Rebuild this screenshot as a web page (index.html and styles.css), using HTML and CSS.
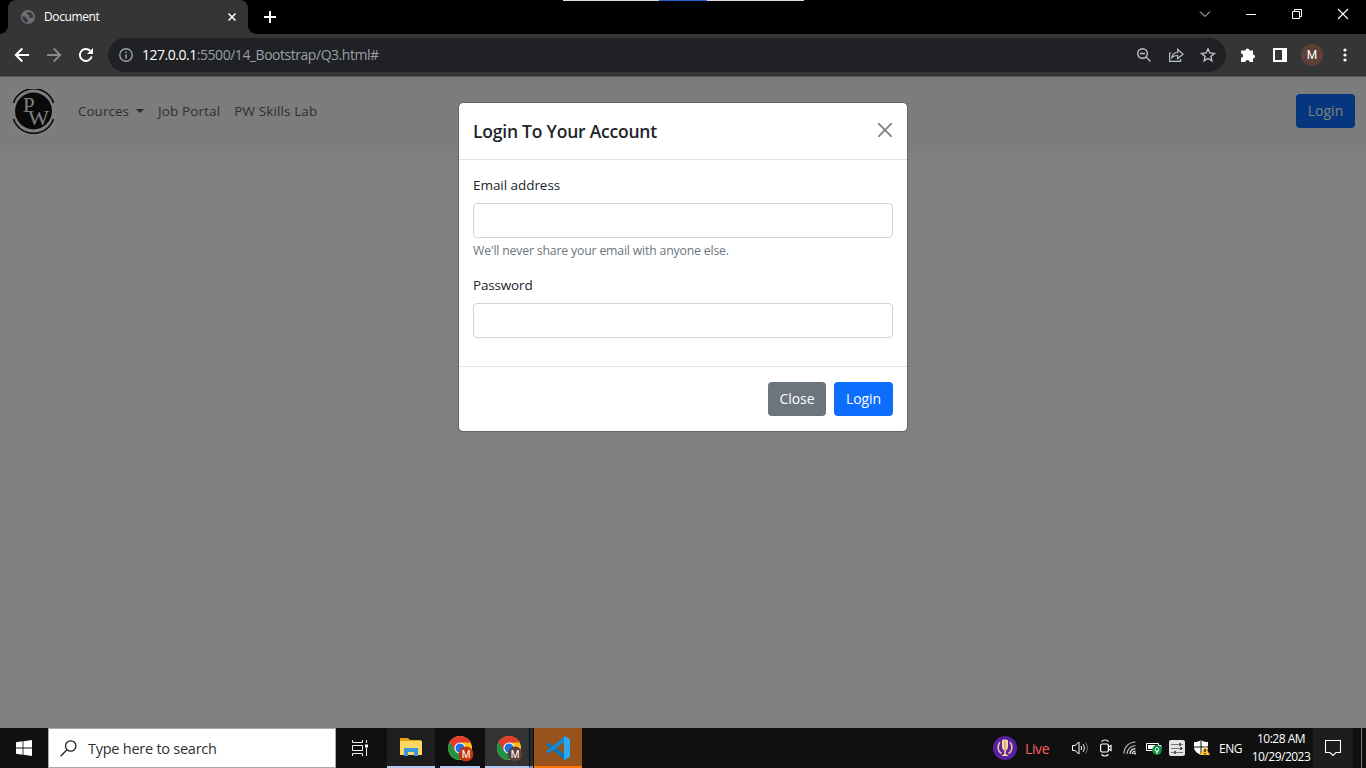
FILE: index.html
```
<!DOCTYPE html>
<html lang="en">
<head>
<meta charset="utf-8">
<title>Document</title>
<link rel="stylesheet" href="styles.css">
</head>
<body>
<div class="screen">
  <header class="tabstrip">
    <div class="snapbar"></div>
    <div class="tab">
      <svg class="globe" width="14" height="14" viewBox="0 0 14 14"><circle cx="7" cy="7" r="7" fill="#6b7075"/><path d="M1.500 6.200C3.500 6 5 7 5.400 8.200c.3 1 1.400.8 1.400 2v2.300C4 12.500 1.300 10 1.500 6.200zM7 2.200c-1.400.3-1.600 1.500-.8 2.100.9.6 2 .2 2.200 1.300.2 1-.9 1.300.2 2 1 .6 2.500.2 3.600-.1.3-3.400-2.200-5.600-5.200-5.300z" fill="#35363a"/></svg>
      <span class="tab-title">Document</span>
      <svg class="tab-x" width="8" height="8" viewBox="0 0 8 8"><path d="M.5.5l7 7M7.500.5l-7 7" stroke="#fff" stroke-width="1.500"/></svg>
    </div>
    <svg class="plus" width="12" height="12" viewBox="0 0 12 12"><path d="M6 0v12M0 6h12" stroke="#fff" stroke-width="2"/></svg>
    <div class="window-controls">
      <svg width="46" height="28" viewBox="0 0 46 28"><path d="M18 11.500l5 5 5-5" fill="none" stroke="#eee"/></svg>
      <svg width="46" height="28" viewBox="0 0 46 28"><path d="M18 14.500h10" stroke="#fff"/></svg>
      <svg width="46" height="28" viewBox="0 0 46 28"><path d="M18.500 11.500h7v7h-7zM20.500 11.500v-2h7v7h-2" fill="none" stroke="#fff"/></svg>
      <svg width="46" height="28" viewBox="0 0 46 28"><path d="M18 9l10 10M28 9L18 19" fill="none" stroke="#fff" stroke-width="1.100"/></svg>
    </div>
  </header>
  <div class="toolbar">
    <svg class="nav-icons" width="94" height="42" viewBox="0 0 94 42"><g fill="none" stroke-width="2"><path d="M29 21H16M22.300 14.500L15.800 21l6.500 6.500" stroke="#fff"/><path d="M47 21h13M53.700 14.500l6.500 6.500-6.500 6.500" stroke="#888"/><path d="M91.700 22.500a6 6 0 1 1-1.500-5.700" stroke="#fff"/></g><path d="M93 14v6h-6z" fill="#fff"/></svg>
    <div class="omnibox">
      <svg width="14" height="14" viewBox="0 0 14 14"><circle cx="7" cy="7" r="6.200" fill="none" stroke="#9aa0a6" stroke-width="1.400"/><path d="M7 6.200v4.300M7 3.500v1.500" stroke="#9aa0a6" stroke-width="1.500"/></svg>
      <span class="url"><b>127.0.0.1</b>:5500/14_Bootstrap/Q3.html#</span>
      <div class="omni-actions">
        <svg width="16" height="16" viewBox="0 0 16 16" fill="none" stroke="#bdc1c6" stroke-width="1.400"><circle cx="6.500" cy="6.500" r="4.800"/><path d="M4 6.500h5M10 10l4.500 4.500"/></svg>
        <svg width="16" height="16" viewBox="0 0 16 16" fill="none" stroke="#bdc1c6" stroke-width="1.200"><path d="M3 6H1.600v8.400h11V12M3.800 10.500c.6-3.500 2.800-5 5.900-5V2.300L15 7.200l-5.300 4.500V8.500c-2.600-.1-4.400.5-5.900 2z"/></svg>
        <svg width="16" height="16" viewBox="0 0 16 16" fill="none" stroke="#c5c8cc" stroke-width="1.300"><path d="M8 1.800l1.800 4.200 4.600.4-3.500 3 1 4.500L8 11.500 4.100 13.900l1-4.500-3.500-3 4.600-.4z"/></svg>
      </div>
    </div>
    <div class="tools">
      <svg width="16" height="16" viewBox="0 0 16 16"><path d="M1 3.500h4.500a2 2 0 1 1 4 0H13v4a2 2 0 1 1 0 4V15H9.600a2.100 2.100 0 0 0-4.200 0H1v-4.200a2.100 2.100 0 0 0 0-4.200z" fill="#fff"/></svg>
      <svg width="14" height="14" viewBox="0 0 14 14"><path fill="#fff" fill-rule="evenodd" d="M0 0h14v14H0zM2 2v10h7V2z"/></svg>
      <span class="avatar">M</span>
      <svg width="4" height="14" viewBox="0 0 4 14" fill="#fff"><circle cx="2" cy="2" r="1.600"/><circle cx="2" cy="7" r="1.600"/><circle cx="2" cy="12" r="1.600"/></svg>
    </div>
  </div>
  <main class="page">
    <nav class="navbar">
      <svg class="logo" width="45" height="45" viewBox="0 0 45 45"><path fill="#fdfdfe" d="M0 0h45v45H0z"/><circle cx="22.500" cy="22" r="18.500" fill="#151515"/><g fill="none" stroke="#151515" stroke-width="1.600"><path d="M2.500 14a21 20.500 0 0 1 40 0M2.500 30a21 20.500 0 0 0 40 0"/></g><g fill="#fff" font-family="Liberation Serif, serif" font-size="21"><text x="12" y="22.500">P</text><text x="17" y="36" textLength="21" lengthAdjust="spacingAndGlyphs">W</text></g></svg>
      <a class="nav-link courses">Cources</a><i class="caret"></i>
      <a class="nav-link portal">Job Portal</a>
      <a class="nav-link lab">PW Skills Lab</a>
      <button class="btn primary nav-login">Login</button>
    </nav>
    <div class="backdrop">
      <section class="modal">
        <div class="modal-header"><h5>Login To Your Account</h5>
          <svg width="14" height="14" viewBox="0 0 14 14"><path d="M.7.7l12.600 12.600M13.300.7L.7 13.300" stroke="#808080" stroke-width="1.800" stroke-linecap="round"/></svg>
        </div>
        <div class="modal-body">
          <label class="email">Email address</label>
          <input type="text">
          <div class="hint">We'll never share your email with anyone else.</div>
          <label class="password">Password</label>
          <input type="password">
        </div>
        <div class="modal-footer"><button class="btn secondary">Close</button><button class="btn primary">Login</button></div>
      </section>
    </div>
  </main>
  <footer class="taskbar">
    <div class="start"><svg width="16" height="16" viewBox="0 0 16 16" fill="#fff"><path d="M0 2.200l6.600-.9v6.200H0zM7.400 1.200L16 0v7.500H7.400zM0 8.400h6.600v6.300L0 13.800zM7.400 8.400H16V16l-8.600-1.200z"/></svg></div>
    <div class="search">
      <svg width="17" height="17" viewBox="0 0 17 17" fill="none" stroke="#222" stroke-width="1.300"><circle cx="10.700" cy="6" r="5.200"/><path d="M7 9.800L.6 16.200"/></svg>
      <span>Type here to search</span>
    </div>
    <div class="taskview"><svg width="17" height="16" viewBox="0 0 17 16" fill="none" stroke="#eee"><path d="M.5 0v2.500h10V0M.5 5.500h10v5H.5zM.5 16v-2.500h10V16M14.500 0v3M14.500 8v8"/><path d="M13 4.500h3v3h-3z" fill="#fff" stroke="none"/></svg></div>
    <div class="app explorer"><svg width="22" height="20" viewBox="0 0 22 20"><path d="M0 1h8l2 2h11v4H0z" fill="#e8a410"/><path d="M0 4h22v14H0z" fill="#ffd764"/><path d="M4 11h14v8h-4v-4H8v4H4z" fill="#3a96dc"/></svg></div>
    <div class="app chrome-one">
      <svg width="30" height="30" viewBox="0 0 30 30"><circle cx="13" cy="13" r="12" fill="#fbc116"/><path d="M2.600 7A12 12 0 0 0 13 25l5.200-9z" fill="#229342"/><path d="M2.600 7L8 16l5-8.500h10.700A12 12 0 0 0 2.600 7z" fill="#e33b2e"/><circle cx="13" cy="13" r="5.600" fill="#fff"/><circle cx="13" cy="13" r="4.500" fill="#1a73e8"/><circle cx="19" cy="19" r="7.500" fill="#c2330f"/><text x="19" y="22.600" text-anchor="middle" fill="#fff" font-size="10" font-family="Roboto, sans-serif">M</text></svg>
    </div>
    <div class="app chrome-two">
      <svg width="30" height="30" viewBox="0 0 30 30"><circle cx="13" cy="13" r="12" fill="#fbc116"/><path d="M2.600 7A12 12 0 0 0 13 25l5.200-9z" fill="#229342"/><path d="M2.600 7L8 16l5-8.500h10.700A12 12 0 0 0 2.600 7z" fill="#e33b2e"/><circle cx="13" cy="13" r="5.600" fill="#fff"/><circle cx="13" cy="13" r="4.500" fill="#1a73e8"/><circle cx="19" cy="19" r="7.500" fill="#5d4037"/><text x="19" y="22.600" text-anchor="middle" fill="#fff" font-size="10" font-family="Roboto, sans-serif">M</text></svg>
    </div>
    <div class="stack"></div>
    <div class="app vscode"><svg width="24" height="24" viewBox="0 0 24 24"><path d="M0 8.500L2.500 6.500 19 18.500V24z" fill="#0877b9"/><path d="M0 15.500l2.500 2L19 5.500V0z" fill="#168bd2"/><path d="M18 0l6 2.800v18.400L18 24z" fill="#2aa8f2"/></svg></div>
    <div class="tray">
      <svg class="trophy" width="24" height="24" viewBox="0 0 24 24"><circle cx="12" cy="12" r="12" fill="#5a219f"/><g fill="none" stroke="#e9c99a" stroke-width="1.500"><path d="M7 6c-3 4-2.500 9 1.500 11.500M17 6c3 4 2.500 9-1.500 11.500"/></g><path d="M9 4.500c1-1.300 5-1.300 6 0v6c0 2-1 3.500-2 4v3.500l2.500 2h-7l2.500-2v-3.500c-1-.5-2-2-2-4z" fill="#f5d9a8"/><path d="M12 5v13" stroke="#b58452"/></svg>
      <span class="live">Live</span>
      <svg class="speaker" width="17" height="16" viewBox="0 0 17 16" fill="none" stroke="#fff"><path d="M.5 5.500H3l4-3.500v12L3 10.500H.5z"/><path d="M9 6c.8 1.200.8 2.800 0 4M11 4.200c1.800 2.300 1.800 5.300 0 7.600"/><path d="M13.500 2.500c2.500 3.400 2.500 7.600 0 11" stroke="#777"/></svg>
      <svg class="camera" width="14" height="18" viewBox="0 0 14 18" fill="none" stroke="#fff" stroke-width="1.200"><rect x="1.600" y="5" width="7.800" height="8" rx="1.500"/><path d="M9.500 8L12 6.500v5L9.500 10M2.500 2.500c2-1.800 5-1.800 7 0M2.500 15.500c2 1.800 5 1.800 7 0"/></svg>
      <svg class="wifi" width="14" height="14" viewBox="0 0 14 14" fill="none" stroke="#fff" stroke-width="1.200"><g stroke="#bbb"><path d="M1 12.500A11.500 11.500 0 0 1 12.500 1M4 13a9 9 0 0 1 8.500-8.500"/></g><path d="M7 13a6 6 0 0 1 5.500-5.500M9.500 13a3 3 0 0 1 3-3"/><circle cx="12" cy="12.500" r="1" fill="#fff" stroke="none"/></svg>
      <svg class="battery" width="17" height="14" viewBox="0 0 17 14"><path d="M.5 2.500h12v7H.5zM13 4.500h2v3h-2" fill="none" stroke="#fff"/><path d="M2 4h7v4H2z" fill="#fff"/><circle cx="11" cy="9" r="4.800" fill="#139443"/><path d="M11 6c2.500 2 2.200 4.500 0 4.500S8.500 8 11 6M11 9v4" fill="none" stroke="#fff"/></svg>
      <svg class="sliders" width="16" height="16" viewBox="0 0 16 16"><rect width="16" height="16" rx="2" fill="#e5e5e5"/><path d="M2 4.500h12M2 8.500h12M2 12.500h12" stroke="#777"/><path d="M10 3h2v3h-2zM11 7h2v3h-2zM5 11h2v3H5z" fill="#555"/></svg>
      <svg class="shield" width="16" height="16" viewBox="0 0 16 16"><path d="M0 2c3 0 5-.5 7-2 2 1.500 4 2 7 2v5c0 4-3 6-7 8-4-2-7-4-7-8z" fill="#fff"/><path d="M7 0v15M0 7h14" stroke="#111" stroke-width="1"/><path d="M11 6l5 9H6z" fill="#ffc229"/><path d="M11 9v3M11 13v1.300" stroke="#111" stroke-width="1.300"/></svg>
      <span class="lang">ENG</span>
      <div class="clock"><span class="time">10:28 AM</span><span class="date">10/29/2023</span></div>
      <div class="notice"><svg width="16" height="17" viewBox="0 0 16 17"><path d="M.5.5h15v12H11L8 15.500 5 12.500H.5z" fill="none" stroke="#fff" stroke-width="1.100"/></svg></div>
      <div class="desktop-edge"></div>
    </div>
  </footer>
</div>
</body>
</html>
```
FILE: styles.css
```
* { box-sizing: border-box; }
body { margin: 0; font-family: "Open Sans", "Noto Sans", sans-serif; }
svg { display: block; flex: none; }
span, a, h5, label { white-space: nowrap; }
.screen { width: 1366px; height: 768px; display: flex; flex-direction: column; overflow: hidden; background: #000; }

.tabstrip { height: 34px; flex: none; display: flex; padding-left: 8px; position: relative; background: #000; }
.snapbar { position: absolute; left: 563px; top: 0; width: 241px; height: 1px; background: linear-gradient(90deg, #ddd 96px, #2860d0 96px, #2860d0 144px, #ddd 144px); }
.tab { width: 240px; height: 34px; display: flex; align-items: center; padding: 0 12px 0 13px; background: #353535; border-radius: 8px 8px 0 0; position: relative; }
.tab::before, .tab::after { content: ""; position: absolute; bottom: 0; width: 8px; height: 8px; }
.tab::before { left: -8px; background: radial-gradient(circle at 0 0, #000 7.500px, #353535 8px); }
.tab::after { right: -8px; background: radial-gradient(circle at 100% 0, #000 7.500px, #353535 8px); }
.tab-title { margin: -1px 0 0 9px; font-size: 12px; color: #fff; letter-spacing: -.4px; }
.tab-x { margin-left: auto; }
.plus { margin: 11px 0 0 16px; }
.window-controls { margin-left: auto; display: flex; }

.toolbar { height: 42px; flex: none; display: flex; align-items: center; background: #353535; }
.omnibox { margin-left: 14px; width: 1118px; height: 34px; border-radius: 17px; background: #202124; display: flex; align-items: center; padding: 0 10px 0 11px; }
.url { margin: -1px 0 0 9px; font-size: 14px; letter-spacing: -.47px; color: #9aa0a6; }
.url b { font-weight: 400; color: #fff; }
.omni-actions { margin-left: auto; display: flex; gap: 16px; }
.tools { display: flex; align-items: center; padding-left: 14px; }
.tools > :nth-child(2) { margin-left: 17px; }
.avatar { margin-left: 14px; width: 22px; height: 22px; border-radius: 50%; background: #5d4037; color: #fff; font: 12px/22px Roboto, sans-serif; text-align: center; }
.tools > :last-child { margin-left: 20px; }

.page { height: 652px; flex: none; position: relative; background: #fff; border-top: 1px solid #aaa; }
.navbar { height: 68px; display: flex; align-items: center; padding: 0 11px; background: #f8f9fa; }
.logo { align-self: flex-start; margin-top: 12px; }
.nav-link { font-size: 13.500px; letter-spacing: .12px; color: #5e5f62; }
.courses { margin-left: 22px; width: 51px; letter-spacing: 0; }
.caret { margin: 0 14px 0 7px; border: 4px solid transparent; border-top-color: #555659; border-bottom: 0; }
.lab { margin-left: 14px; }
.btn { height: 34px; border: 0; border-radius: 4px; padding: 0; font: 14px/34px "Open Sans", sans-serif; color: #fff; width: 59px; text-align: center; }
.primary { background: #0d6efd; }
.secondary { background: #6c757d; width: 58px; }
.nav-login { margin-left: auto; }
.modal .btn { font-weight: 500; letter-spacing: -.1px; }
.backdrop { position: absolute; inset: -1px 0 0; padding-top: 26px; background: rgba(0, 0, 0, .5); }

.modal { width: 450px; height: 330px; margin: 0 auto; border: 1px solid #666; border-radius: 5px; background: #fff; background-clip: padding-box; color: #212529; display: flex; flex-direction: column; }
.modal-header { height: 57px; display: flex; justify-content: space-between; align-items: flex-start; padding: 20px 15px 0 14px; border-bottom: 1px solid #dee2e6; }
.modal-header h5 { margin: -4px 0 0; font-size: 17.500px; line-height: 25px; font-weight: 600; letter-spacing: -.22px; }
.modal-body { height: 207px; padding: 14px; border-bottom: 1px solid #dee2e6; display: flex; flex-direction: column; }
.modal-body label { font-size: 13.500px; line-height: 22px; height: 22px; margin-bottom: 7px; letter-spacing: -.05px; }
.modal-body input { width: 420px; height: 35px; flex: none; border: 1px solid #ced4da; border-radius: 4px; background: #fff; }
.hint { height: 19px; margin: 3px 0 17px; font-size: 12.300px; line-height: 19px; letter-spacing: -.19px; color: #6c757d; white-space: nowrap; }
.modal-body .password { margin-bottom: 7px; margin-top: -3px; letter-spacing: -.17px; }
.modal-footer { display: flex; justify-content: flex-end; gap: 8px; padding: 15px 14px; }

.taskbar { height: 40px; flex: none; display: flex; background: #101010; color: #fff; }
.start { width: 48px; display: grid; place-items: center; }
.search { width: 288px; display: flex; align-items: center; padding-left: 11px; background: #fff; border: 1px solid #aaa; color: #303030; font-size: 14.500px; letter-spacing: -.25px; }
.search span { margin-left: 11px; }
.taskview { width: 51px; display: grid; place-items: center; padding-right: 3px; }
.app { height: 40px; display: flex; align-items: center; justify-content: center; border-bottom: 2px solid #b1c9f4; }
.explorer { width: 48px; margin-right: 5px; background: #1e1e1e; }
.chrome-one { width: 40px; margin-right: 5px; }
.chrome-one svg, .chrome-two svg { margin: 6px 0 0 3px; }
.chrome-two { width: 44px; background: #333; }
.chrome-two svg { margin-left: 7px; }
.stack { width: 4px; margin-right: 1px; background: #292929; border-left: 1px solid #111; border-bottom: 2px solid #8298c0; }
.vscode { width: 48px; background: #98521b; border-color: #ff7600; }
.vscode svg { margin-top: 2px; }
.tray { margin-left: auto; display: flex; align-items: center; }
.live { margin-left: 8px; width: 25px; color: #ff5e5e; font-size: 14px; letter-spacing: -.4px; }
.speaker { margin-left: 22px; }
.camera { margin-left: 10px; }
.wifi { margin-left: 10px; }
.battery { margin-left: 9px; }
.sliders { margin-left: 6px; }
.shield { margin-left: 9px; }
.lang { margin-left: 9px; width: 24px; font-size: 12px; letter-spacing: -.5px; }
.clock { margin-left: 8px; width: 60px; display: flex; flex-direction: column; align-items: center; font-size: 12px; line-height: 18px; letter-spacing: -.5px; }
.notice { margin-left: 2px; width: 40px; height: 40px; display: grid; place-items: center; background: #1d1d1d; }
.desktop-edge { width: 5px; height: 40px; margin-left: 8px; border-left: 1px solid #777; }
```
